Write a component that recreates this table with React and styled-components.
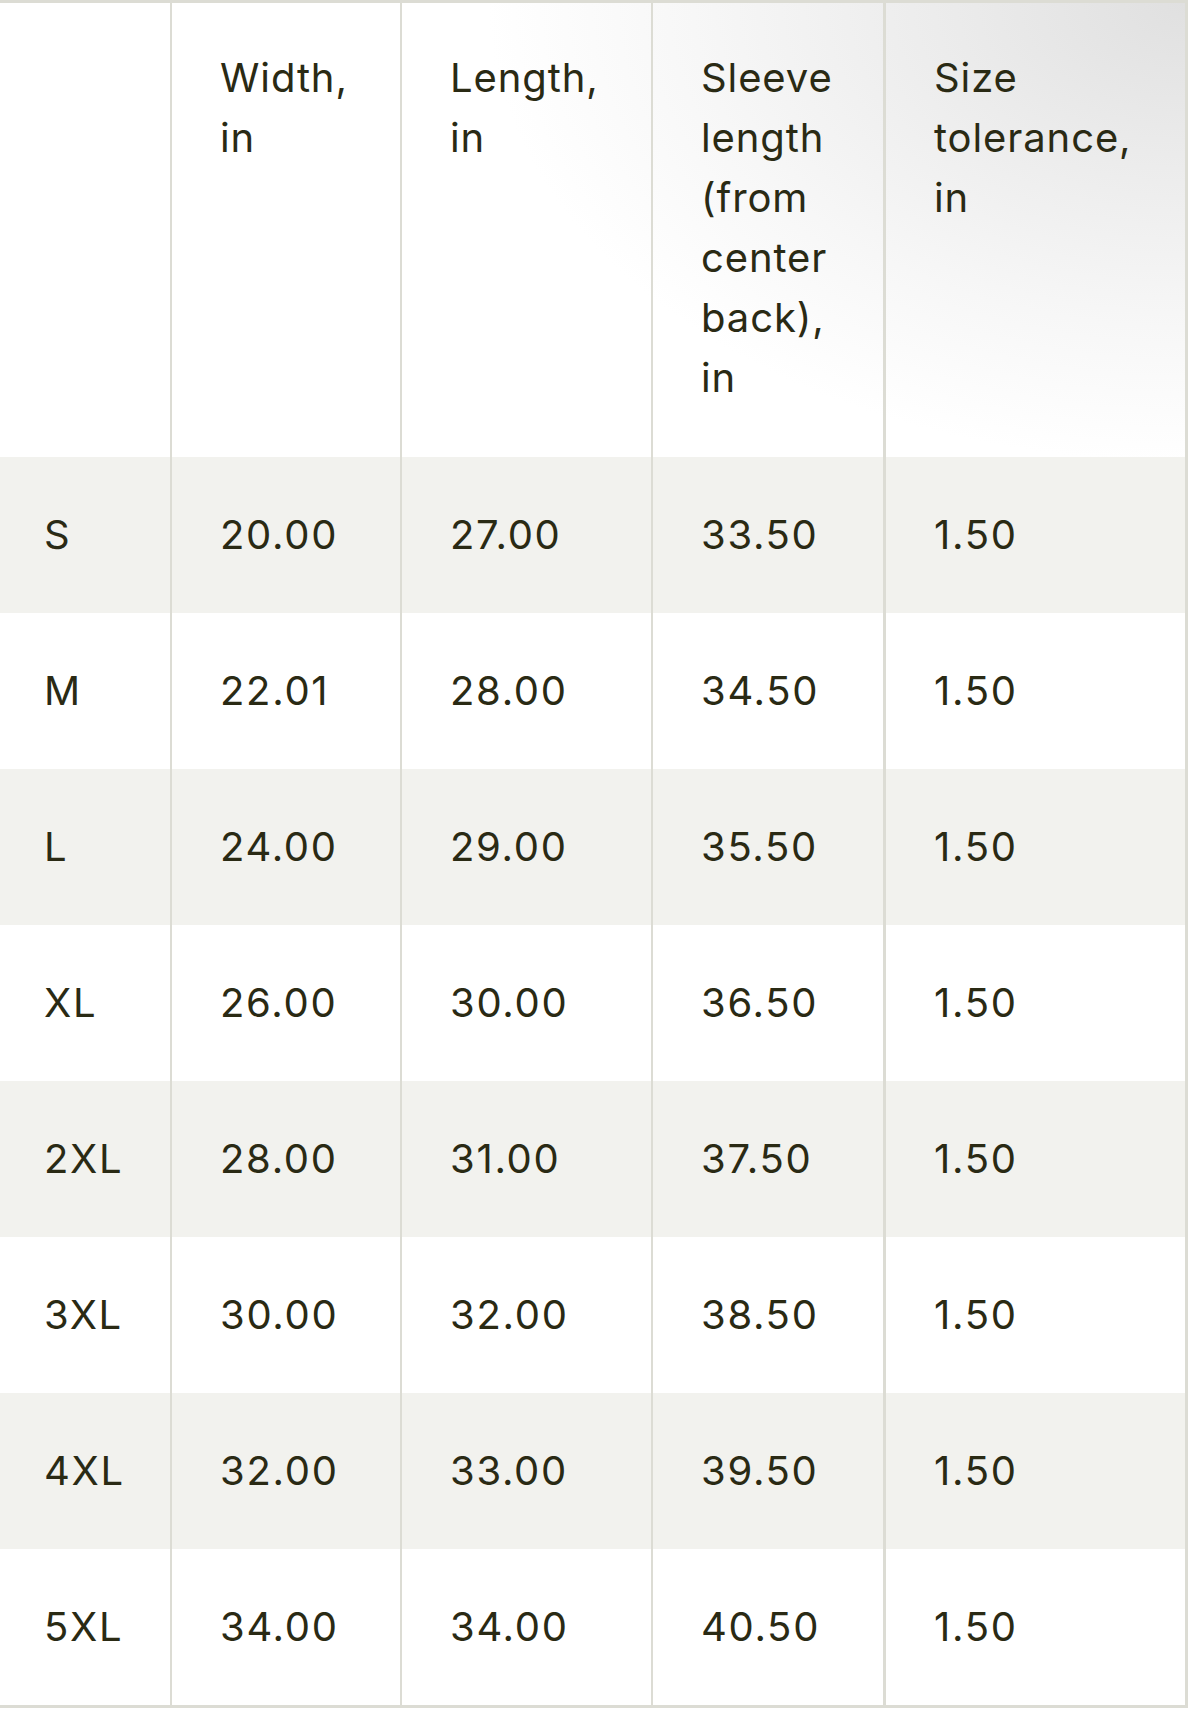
import React from 'react'
import styled, { createGlobalStyle } from 'styled-components'

const GlobalStyle = createGlobalStyle`
  html, body {
    margin: 0;
    padding: 0;
    background: #fff;
  }
  body {
    font-family: Inter, "Liberation Sans", Arial, sans-serif;
    color: #2a2a14;
  }
`

const Table = styled.div`
  width: 1188px;
  box-sizing: border-box;
  border-top: 3px solid #dcdcd4;
  border-right: 3px solid #dcdcd4;
  border-bottom: 3px solid #dcdcd4;
`

const Row = styled.div`
  display: grid;
  grid-template-columns: 170px 230px 251px 232px 1fr;
  height: ${p => (p.$head ? '454px' : '156px')};
  background: ${p =>
    p.$head
      ? 'radial-gradient(ellipse 820px 540px at 100% 0%, #e0e0e0 0%, #ebebeb 28%, #f7f7f7 60%, #ffffff 85%)'
      : p.$striped
      ? '#f2f2ee'
      : '#ffffff'};
`

const Cell = styled.div`
  box-sizing: border-box;
  display: flex;
  align-items: ${p => (p.$head ? 'flex-start' : 'center')};
  padding: ${p => (p.$head ? '45px 12px 0 48px' : '0 12px 0 48px')};
  padding-left: ${p => (p.$first ? '44px' : '48px')};
  border-left: ${p => (p.$first ? 'none' : p.$last ? '3px solid #dcdcd4' : '2px solid #dcdcd4')};
  font-size: 40px;
  line-height: 60px;
  font-weight: 400;
  letter-spacing: ${p => (p.$head ? '0.9px' : '1.7px')};
`

const columns = [
  '',
  'Width,\nin',
  'Length,\nin',
  'Sleeve\nlength\n(from\ncenter\nback),\nin',
  'Size\ntolerance,\nin',
]

const rows = [
  ['S', '20.00', '27.00', '33.50', '1.50'],
  ['M', '22.01', '28.00', '34.50', '1.50'],
  ['L', '24.00', '29.00', '35.50', '1.50'],
  ['XL', '26.00', '30.00', '36.50', '1.50'],
  ['2XL', '28.00', '31.00', '37.50', '1.50'],
  ['3XL', '30.00', '32.00', '38.50', '1.50'],
  ['4XL', '32.00', '33.00', '39.50', '1.50'],
  ['5XL', '34.00', '34.00', '40.50', '1.50'],
]

const HeadText = styled.span`
  white-space: pre-line;
`

export default function App() {
  return (
    <>
      <GlobalStyle />
      <Table>
        <Row $head>
          {columns.map((c, i) => (
            <Cell key={i} $head $first={i === 0} $last={i === columns.length - 1}>
              <HeadText>{c}</HeadText>
            </Cell>
          ))}
        </Row>
        {rows.map((r, ri) => (
          <Row key={r[0]} $striped={ri % 2 === 0}>
            {r.map((v, i) => (
              <Cell key={i} $first={i === 0} $last={i === r.length - 1}>
                {v}
              </Cell>
            ))}
          </Row>
        ))}
      </Table>
    </>
  )
}
